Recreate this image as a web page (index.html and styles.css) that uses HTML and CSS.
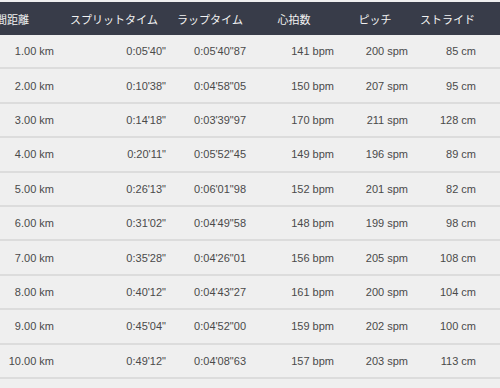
FILE: index.html
```html
<!DOCTYPE html>
<html lang="ja">
<head>
<meta charset="utf-8">
<link rel="stylesheet" href="styles.css">
</head>
<body>
<div class="laps">
  <div class="row head">
    <div class="c">区間距離</div>
    <div class="c">スプリットタイム</div>
    <div class="c">ラップタイム</div>
    <div class="c">心拍数</div>
    <div class="c">ピッチ</div>
    <div class="c last">ストライド</div>
  </div>
  <div class="row"><div class="c">1.00 km</div><div class="c">0:05'40"</div><div class="c">0:05'40"87</div><div class="c">141 bpm</div><div class="c">200 spm</div><div class="c last">85 cm</div></div>
  <div class="row"><div class="c">2.00 km</div><div class="c">0:10'38"</div><div class="c">0:04'58"05</div><div class="c">150 bpm</div><div class="c">207 spm</div><div class="c last">95 cm</div></div>
  <div class="row"><div class="c">3.00 km</div><div class="c">0:14'18"</div><div class="c">0:03'39"97</div><div class="c">170 bpm</div><div class="c">211 spm</div><div class="c last">128 cm</div></div>
  <div class="row"><div class="c">4.00 km</div><div class="c">0:20'11"</div><div class="c">0:05'52"45</div><div class="c">149 bpm</div><div class="c">196 spm</div><div class="c last">89 cm</div></div>
  <div class="row"><div class="c">5.00 km</div><div class="c">0:26'13"</div><div class="c">0:06'01"98</div><div class="c">152 bpm</div><div class="c">201 spm</div><div class="c last">82 cm</div></div>
  <div class="row"><div class="c">6.00 km</div><div class="c">0:31'02"</div><div class="c">0:04'49"58</div><div class="c">148 bpm</div><div class="c">199 spm</div><div class="c last">98 cm</div></div>
  <div class="row"><div class="c">7.00 km</div><div class="c">0:35'28"</div><div class="c">0:04'26"01</div><div class="c">156 bpm</div><div class="c">205 spm</div><div class="c last">108 cm</div></div>
  <div class="row"><div class="c">8.00 km</div><div class="c">0:40'12"</div><div class="c">0:04'43"27</div><div class="c">161 bpm</div><div class="c">200 spm</div><div class="c last">104 cm</div></div>
  <div class="row"><div class="c">9.00 km</div><div class="c">0:45'04"</div><div class="c">0:04'52"00</div><div class="c">159 bpm</div><div class="c">202 spm</div><div class="c last">100 cm</div></div>
  <div class="row"><div class="c">10.00 km</div><div class="c">0:49'12"</div><div class="c">0:04'08"63</div><div class="c">157 bpm</div><div class="c">203 spm</div><div class="c last">113 cm</div></div>
</div>
</body>
</html>
```
FILE: styles.css
```css
html, body {
  margin: 0;
  padding: 0;
  background: #efefef;
  overflow: hidden;
}
body {
  width: 500px;
  height: 388px;
}
.laps {
  width: 540px;
  margin-left: -40px;
  padding-top: 2px;
  font-family: "Liberation Sans", Arial, "Noto Sans CJK JP", sans-serif;
  font-size: 11px;
  color: #4a4a4a;
}
.row {
  display: grid;
  grid-template-columns: 102px 112px 80px 88px 74px 84px;
  height: 34.4px;
  box-sizing: border-box;
  border-bottom: 2px solid #dcdcdc;
  align-items: center;
}
.row .c {
  text-align: right;
  padding-right: 8px;
  white-space: nowrap;
}
.row .c.last {
  padding-right: 24px;
}
.head {
  height: 33px;
  background: #383c49;
  border-bottom: none;
  color: #f2f2f2;
  font-family: "Noto Sans CJK JP", sans-serif;
  font-size: 11px;
}
.head .c {
  text-align: center;
}
.head .c.last {
  padding-right: 21px;
}
```
